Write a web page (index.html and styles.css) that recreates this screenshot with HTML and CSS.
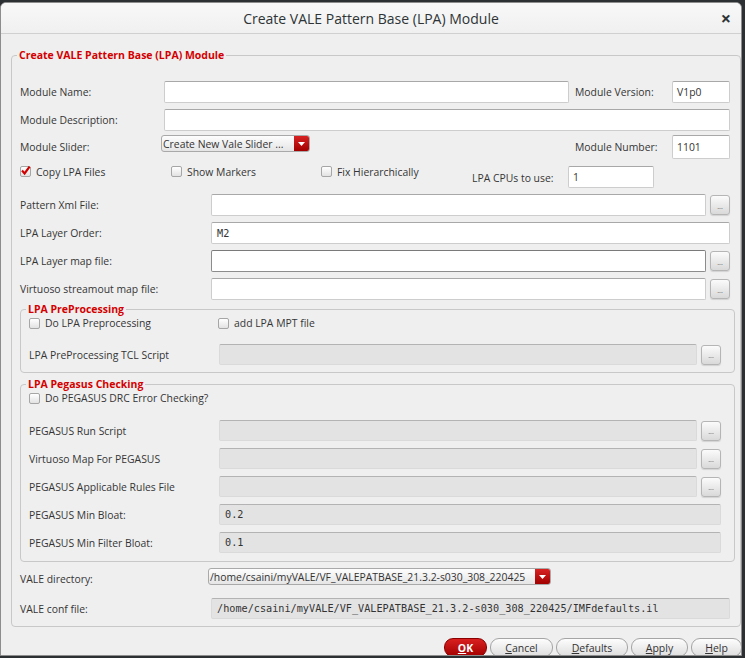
FILE: index.html
```html
<!DOCTYPE html>
<html>
<head>
<meta charset="utf-8">
<title>Create VALE Pattern Base (LPA) Module</title>
<link rel="stylesheet" href="styles.css">
</head>
<body>
<div class="win">
  <div class="titlebar">
    <span class="title">Create VALE Pattern Base (LPA) Module</span>
    <span class="close">×</span>
  </div>

  <fieldset class="grp outer">
    <legend>Create VALE Pattern Base (LPA) Module</legend>

    <div class="row h22">
      <span class="lbl w144">Module Name:</span>
      <div class="inp grow"></div>
      <span class="lbl vlab">Module Version:</span>
      <div class="inp w58"><span class="val">V1p0</span></div>
    </div>

    <div class="row h22 mt6">
      <span class="lbl w144">Module Description:</span>
      <div class="inp grow"></div>
    </div>

    <div class="row h24 mt4">
      <span class="lbl w141">Module Slider:</span>
      <div class="combo w149 top">
        <span class="ctxt">Create New Vale Slider ...</span>
        <span class="carr"><svg width="7" height="4" viewBox="0 0 7 4"><path d="M0 0H7L3.5 4Z" fill="#fff"/></svg></span>
      </div>
      <span class="grow"></span>
      <span class="lbl vlab">Module Number:</span>
      <div class="inp w58 bottom"><span class="val">1101</span></div>
    </div>

    <div class="row h22 mt7">
      <label class="chk w151 top"><span class="cb"><svg class="tick" width="11" height="11" viewBox="0 0 11 11"><path d="M2 5.5L4.6 8.4L9.6 1.6" fill="none" stroke="#d10000" stroke-width="2.2"/></svg></span>Copy LPA Files</label>
      <label class="chk w150 top"><span class="cb"></span>Show Markers</label>
      <label class="chk w151 top"><span class="cb"></span>Fix Hierarchically</label>
      <span class="lbl w96 cpu">LPA CPUs to use:</span>
      <div class="inp w86"><span class="val">1</span></div>
    </div>

    <div class="row h22 mt6">
      <span class="lbl w191">Pattern Xml File:</span>
      <div class="inp grow"></div>
      <span class="dots">...</span>
    </div>

    <div class="row h22 mt6">
      <span class="lbl w191">LPA Layer Order:</span>
      <div class="inp grow"><span class="mono">M2</span></div>
    </div>

    <div class="row h22 mt6">
      <span class="lbl w191">LPA Layer map file:</span>
      <div class="inp grow focus"></div>
      <span class="dots">...</span>
    </div>

    <div class="row h22 mt6">
      <span class="lbl w191">Virtuoso streamout map file:</span>
      <div class="inp grow"></div>
      <span class="dots">...</span>
    </div>

    <fieldset class="grp inner pre">
      <legend>LPA PreProcessing</legend>
      <div class="crow">
        <label class="chk w189"><span class="cb"></span>Do LPA Preprocessing</label>
        <label class="chk"><span class="cb"></span>add LPA MPT file</label>
      </div>
      <div class="irow h21 mt15">
        <span class="lbl w190">LPA PreProcessing TCL Script</span>
        <div class="inp dis grow"></div>
        <span class="dots">...</span>
      </div>
    </fieldset>

    <fieldset class="grp inner peg">
      <legend>LPA Pegasus Checking</legend>
      <div class="crow">
        <label class="chk"><span class="cb"></span>Do PEGASUS DRC Error Checking?</label>
      </div>
      <div class="irow h21 mt16">
        <span class="lbl w190">PEGASUS Run Script</span>
        <div class="inp dis grow"></div>
        <span class="dots">...</span>
      </div>
      <div class="irow h21 mt7">
        <span class="lbl w190">Virtuoso Map For PEGASUS</span>
        <div class="inp dis grow"></div>
        <span class="dots">...</span>
      </div>
      <div class="irow h21 mt7">
        <span class="lbl w190">PEGASUS Applicable Rules File</span>
        <div class="inp dis grow"></div>
        <span class="dots">...</span>
      </div>
      <div class="irow h21 mt7">
        <span class="lbl w190">PEGASUS Min Bloat:</span>
        <div class="inp dis grow"><span class="mono">0.2</span></div>
      </div>
      <div class="irow h21 mt7">
        <span class="lbl w190">PEGASUS Min Filter Bloat:</span>
        <div class="inp dis grow"><span class="mono">0.1</span></div>
      </div>
    </fieldset>

    <div class="row h22 mt6">
      <span class="lbl w188">VALE directory:</span>
      <div class="combo w343 top">
        <span class="ctxt">/home/csaini/myVALE/VF_VALEPATBASE_21.3.2-s030_308_220425</span>
        <span class="carr"><svg width="7" height="4" viewBox="0 0 7 4"><path d="M0 0H7L3.5 4Z" fill="#fff"/></svg></span>
      </div>
    </div>

    <div class="row h21 mt8">
      <span class="lbl w191">VALE conf file:</span>
      <div class="inp dis grow"><span class="mono">/home/csaini/myVALE/VF_VALEPATBASE_21.3.2-s030_308_220425/IMFdefaults.il</span></div>
    </div>
  </fieldset>

  <div class="btnrow">
    <span class="btn ok w43"><u>O</u>K</span>
    <span class="btn w63"><u>C</u>ancel</span>
    <span class="btn w72"><u>D</u>efaults</span>
    <span class="btn w57"><u>A</u>pply</span>
    <span class="btn w51"><u>H</u>elp</span>
  </div>
</div>
</body>
</html>
```

FILE: styles.css
```css
* { box-sizing: border-box; }
html, body { margin: 0; padding: 0; }
body {
  width: 745px;
  height: 658px;
  overflow: hidden;
  background: #2c3033;
  font-family: "Open Sans", "Noto Sans", sans-serif;
  font-size: 10.4px;
  color: #353535;
}
.win {
  margin-top: 2px;
  width: 742px;
  height: 654px;
  background: #efefef;
  border: 1px solid #8d8d8d;
  border-radius: 6px 6px 0 0;
  overflow: hidden;
}
.titlebar {
  height: 31px;
  border-bottom: 1px solid #d0d0d0;
  background: linear-gradient(#f8f8f8, #f0f0f0);
  display: grid;
  grid-template-columns: 1fr auto 1fr;
  align-items: center;
}
.title { grid-column: 2; font-size: 14px; color: #2e3436; }
.close { grid-column: 3; justify-self: end; margin-right: 10px; font-size: 18px; line-height: 18px; font-weight: bold; color: #2e3436; }

fieldset.grp {
  border: 1px solid #c8c8c8;
  border-radius: 4px;
  min-width: 0;
}
.outer { margin: 15px 0 0 10px; padding: 20px 5px 7px 8px; }
.inner { margin: 0; padding: 0 13px 7px 8px; }
.pre { margin-top: 3px; }
.peg { margin-top: 5px; padding-bottom: 8px; }
legend {
  color: #d40000;
  font-weight: bold;
  font-size: 10.5px;
  line-height: 12px;
  padding: 0 2px;
  margin-left: -3px;
}

.row { display: flex; align-items: center; padding-right: 5px; }
.irow { display: flex; align-items: center; }
.crow { display: flex; align-items: center; height: 12px; margin-top: 2px; }
.h21 { height: 21px; }
.h22 { height: 22px; }
.h24 { height: 24px; }
.mt4 { margin-top: 4px; }
.mt6 { margin-top: 6px; }
.mt7 { margin-top: 7px; }
.mt8 { margin-top: 8px; }
.mt15 { margin-top: 15px; }
.mt16 { margin-top: 16px; }
.top { align-self: flex-start; }
.bottom { align-self: flex-end; }
.grow { flex: 1; }

.lbl { flex: none; white-space: nowrap; }
.w43 { width: 43px; } .w51 { width: 51px; } .w57 { width: 57px; } .w58 { width: 58px; }
.w63 { width: 63px; } .w72 { width: 72px; } .w86 { width: 86px; } .w96 { width: 96px; }
.w141 { width: 141px; } .w144 { width: 144px; } .w149 { width: 149px; } .w150 { width: 150px; }
.w151 { width: 151px; } .w188 { width: 188px; } .w189 { width: 189px; } .w190 { width: 190px; }
.w191 { width: 191px; } .w343 { width: 343px; }
.vlab { width: 97px; margin-left: 6px; }
.cpu { margin-top: 1px; }

.inp {
  height: 100%;
  flex-shrink: 0;
  background: #fff;
  border: 1px solid #cdcdcd;
  border-top-color: #a8a8a8;
  border-radius: 2px;
  display: flex;
  align-items: center;
  padding-left: 4px;
  overflow: hidden;
  white-space: nowrap;
}
.inp.grow { flex: 1; }
.inp.focus { border-color: #8c8c8c; border-top-color: #7a7a7a; }
.inp.dis { background: #e3e3e3; border-color: #dadada; border-top-color: #b3b3b3; }
.val { color: #333; }
.mono { font-family: "DejaVu Sans Mono", monospace; font-size: 10.2px; color: #333; padding-left: 1px; }

.dots {
  flex: none;
  width: 20px;
  height: 20px;
  margin-left: 4px;
  border: 1px solid #b5b5b5;
  border-radius: 3px;
  background: linear-gradient(#fbfbfb, #d9d9d9);
  box-shadow: 0 1px 1px rgba(0,0,0,0.12);
  display: flex;
  align-items: center;
  justify-content: center;
  font-size: 7px;
  color: #555;
  padding-top: 2px;
}

.combo {
  flex: none;
  height: 17px;
  border: 1px solid #a9a9a9;
  border-radius: 3px;
  background: linear-gradient(#fdfdfd, #e5e5e5);
  display: flex;
  align-items: center;
  overflow: hidden;
}
.ctxt { flex: 1; padding-left: 1px; white-space: nowrap; overflow: hidden; color: #333; }
.carr {
  width: 15px;
  align-self: stretch;
  background: linear-gradient(#d82222, #a20000);
  display: flex;
  align-items: center;
  justify-content: center;
}

.chk { display: flex; align-items: center; height: 11px; white-space: nowrap; flex: none; }
.cb {
  width: 11px;
  height: 11px;
  margin-right: 5px;
  border: 1px solid #a6a6a6;
  border-radius: 2px;
  background: linear-gradient(#ffffff, #e2e2e2);
  flex: none;
}
.tick { display: block; margin: -2px 0 0 -1px; overflow: visible; }

.btnrow {
  display: flex;
  justify-content: flex-end;
  gap: 3px;
  margin-top: 11px;
  margin-right: -1px;
}
.btn {
  flex: none;
  height: 19px;
  border: 1px solid #a5a5a5;
  border-radius: 9px;
  background: linear-gradient(#fdfdfd, #dedede);
  display: flex;
  align-items: center;
  justify-content: center;
  font-size: 10.5px;
  color: #333;
}
.btn.ok {
  background: linear-gradient(#d92020, #a40000);
  border-color: #8a0000;
  color: #fff;
  font-weight: bold;
}
```
